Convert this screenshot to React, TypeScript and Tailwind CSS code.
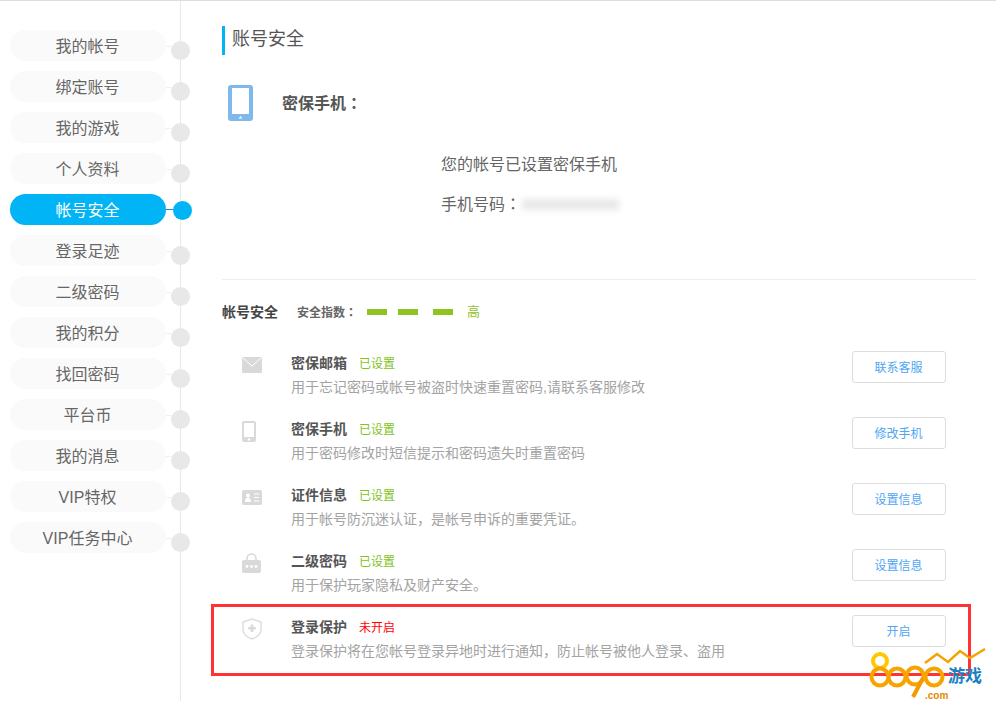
import React from 'react';

const menu = ['我的帐号', '绑定账号', '我的游戏', '个人资料', '帐号安全', '登录足迹', '二级密码', '我的积分', '找回密码', '平台币', '我的消息', 'VIP特权', 'VIP任务中心'];

const MailIcon = () => (
  <svg width="20" height="16" viewBox="0 0 20 16">
    <rect width="20" height="16" rx="1" fill="#d9d9d9" />
    <path d="M0.5 0.5L10 9L19.5 0.5" fill="none" stroke="#fff" strokeWidth="1" />
  </svg>
);

const PhoneIcon = () => (
  <svg width="14" height="21" viewBox="0 0 14 21">
    <rect width="14" height="21" rx="2" fill="#d9d9d9" />
    <rect x="2" y="2" width="10" height="14" fill="#fff" />
    <circle cx="7" cy="18.5" r="1.2" fill="#fff" />
  </svg>
);

const CardIcon = () => (
  <svg width="20" height="15" viewBox="0 0 20 15">
    <rect width="20" height="15" rx="2" fill="#d9d9d9" />
    <circle cx="6" cy="5.5" r="2" fill="#fff" />
    <path d="M3 12c0-3 1.5-4.5 3-4.5S9 9 9 12z" fill="#fff" />
    <path d="M12 4h5M12 7.5h5M12 11h5" stroke="#fff" strokeWidth="1.2" />
  </svg>
);

const LockIcon = () => (
  <svg width="19" height="20" viewBox="0 0 19 20">
    <path d="M5 9V5.5a4.5 4.5 0 0 1 9 0V9" fill="none" stroke="#d9d9d9" strokeWidth="1.6" />
    <rect y="7" width="19" height="13" rx="2" fill="#d9d9d9" />
    <circle cx="5" cy="13.5" r="1.4" fill="#fff" />
    <circle cx="9.5" cy="13.5" r="1.4" fill="#fff" />
    <circle cx="14" cy="13.5" r="1.4" fill="#fff" />
  </svg>
);

const ShieldIcon = () => (
  <svg width="20" height="22" viewBox="0 0 20 22">
    <path d="M10 1L19 4V11C19 16 14.5 19.5 10 21C5.5 19.5 1 16 1 11V4Z" fill="none" stroke="#dedede" strokeWidth="1.5" />
    <path d="M10 6.5V14M6.2 10.2H13.8" stroke="#d9d9d9" strokeWidth="2.6" />
  </svg>
);

const rows = [
  { icon: <MailIcon />, title: '密保邮箱', desc: '用于忘记密码或帐号被盗时快速重置密码,请联系客服修改', action: '联系客服' },
  { icon: <PhoneIcon />, title: '密保手机', desc: '用于密码修改时短信提示和密码遗失时重置密码', action: '修改手机' },
  { icon: <CardIcon />, title: '证件信息', desc: '用于帐号防沉迷认证，是帐号申诉的重要凭证。', action: '设置信息' },
  { icon: <LockIcon />, title: '二级密码', desc: '用于保护玩家隐私及财产安全。', action: '设置信息' },
  { icon: <ShieldIcon />, title: '登录保护', desc: '登录保护将在您帐号登录异地时进行通知，防止帐号被他人登录、盗用', action: '开启', off: true },
];

// centred fullwidth colon, the SC font sets it low and to the left
const Colon = () => <span className="font-['Noto_Sans_CJK_TC',sans-serif]">：</span>;

// site watermark, bottom right corner
function Watermark() {
  return (
    <div className="absolute left-[868px] top-[645px] w-[120px] h-[56px]">
      <svg width="120" height="56" viewBox="0 0 120 56" className="absolute inset-0">
        <path d="M57 17L69 8L80 16L92 5L102 12L117 3" fill="none" stroke="#f5a300" strokeWidth="2.5" />
        <g fill="none" strokeWidth="4">
          <circle cx="12" cy="15" r="7" stroke="#ffc800" />
          <circle cx="12" cy="31" r="8.5" stroke="#f7a400" />
          <circle cx="29" cy="31" r="8.5" stroke="#f7a400" />
          <circle cx="47" cy="30" r="8.5" stroke="#f7a400" />
          <path d="M55 32L45 51" stroke="#f39a00" />
          <circle cx="66" cy="31" r="8.5" stroke="#f7a400" />
        </g>
      </svg>
      <span className="absolute left-[80px] top-[21px] text-[17px] leading-[20px] font-bold text-[#1b7fc1] whitespace-nowrap">游戏</span>
      <span className="absolute left-[57px] top-[44px] text-[10px] leading-[12px] font-bold text-[#e08a00]">.com</span>
    </div>
  );
}

export default function App() {
  return (
    <div className="relative flex h-[701px] w-[996px] overflow-hidden bg-white border-t border-[#ddd] text-[#666] font-['Liberation_Sans','Noto_Sans_CJK_SC',sans-serif]">
      <aside className="w-[181px] shrink-0 border-r border-[#e8e8e8] pt-[29px] pl-[10px]">
        {menu.map((item, i) => {
          const active = i === 4;
          return (
            <div key={item} className="flex items-center h-[31px] mb-[10px] w-[182px]">
              <div className={`w-[156px] h-[31px] shrink-0 rounded-full flex items-center justify-center pt-[2px] pr-[1px] text-[16px] ${active ? 'bg-[#00b4f5] text-white' : 'bg-[#fafafa] text-[#666]'}`}>
                {item}
              </div>
              {active ? (
                <>
                  <div className="w-[7px] h-px bg-[#1e88d8] shrink-0" />
                  <div className="w-[19px] h-[19px] rounded-full bg-[#00b4f5] shrink-0 mt-px" />
                </>
              ) : (
                <>
                  <div className="w-[5px] h-px bg-[#f3efe8] shrink-0 mt-[2px]" />
                  <div className="w-[19px] h-[19px] rounded-full bg-[#e8e8e8] shrink-0 mt-[9px]" />
                </>
              )}
            </div>
          );
        })}
      </aside>

      <main className="ml-[41px] w-[754px] shrink-0">
        <h1 className="mt-[25px] h-[29px] border-l-[3px] border-[#00b4f5] pl-[7px] text-[18px] leading-[26px] font-normal text-[#555]">账号安全</h1>

        <div className="flex items-center mt-[30px] ml-[6px]">
          <svg width="25" height="36" viewBox="0 0 25 36">
            <rect width="25" height="36" rx="3" fill="#7fb8ec" />
            <rect x="4" y="3" width="17" height="26" fill="#fff" />
            <path d="M12.5 31L14.5 33.5H10.5Z" fill="#fff" />
          </svg>
          <div className="ml-[29px] text-[16px] font-bold text-[#555]">密保手机<Colon /></div>
        </div>

        <div className="ml-[219px] mt-[32px] text-[16px] leading-[24px] text-[#666]">
          <p>您的帐号已设置密保手机</p>
          <div className="flex items-center mt-[14px]">
            <span>手机号码<Colon /></span>
            <div className="ml-[1px] w-[97px] h-[11px] bg-[#e8e8e8] blur-[3px]" />
          </div>
        </div>

        <div className="mt-[62px] border-t border-[#eee]" />

        <div className="flex items-center mt-[22px] h-[20px]">
          <span className="text-[14px] font-bold text-[#444]">帐号安全</span>
          <span className="ml-[19px] text-[12px] font-bold text-[#666]">安全指数<Colon /></span>
          <span className="ml-[10px] w-[20px] h-[6px] bg-[#8fc31f]" />
          <span className="ml-[11px] w-[20px] h-[6px] bg-[#8fc31f]" />
          <span className="ml-[15px] w-[20px] h-[6px] bg-[#8fc31f]" />
          <span className="ml-[14px] text-[13px] text-[#8fc31f]">高</span>
        </div>

        <div className="mt-[23px] w-[724px]">
          {rows.map((row) => (
            <div key={row.title} className="relative flex items-start h-[66px]">
              <div className="w-[69px] h-[40px] pl-[20px] flex items-center shrink-0">{row.icon}</div>
              <div className="flex-1 pt-[8px]">
                <div className="flex items-center h-[20px]">
                  <span className="text-[14px] font-bold text-[#555]">{row.title}</span>
                  <span className={`ml-[12px] pt-px text-[12px] ${row.off ? 'text-[#ff0000]' : 'text-[#7fc31c]'}`}>{row.off ? '未开启' : '已设置'}</span>
                </div>
                <p className="mt-[4px] text-[14px] leading-[20px] text-[#a3a3a3] whitespace-nowrap">{row.desc}</p>
              </div>
              <button className="mt-[6px] w-[94px] h-[32px] pt-px pr-px rounded-[3px] border border-[#ddd] bg-white text-[12px] text-[#4ea6f5] shrink-0">{row.action}</button>
              {row.off && <div className="absolute left-[-11px] right-[-25px] top-[-5px] bottom-[-1px] border-[3px] border-[#f33] pointer-events-none" />}
            </div>
          ))}
        </div>
      </main>

      <Watermark />
    </div>
  );
}
